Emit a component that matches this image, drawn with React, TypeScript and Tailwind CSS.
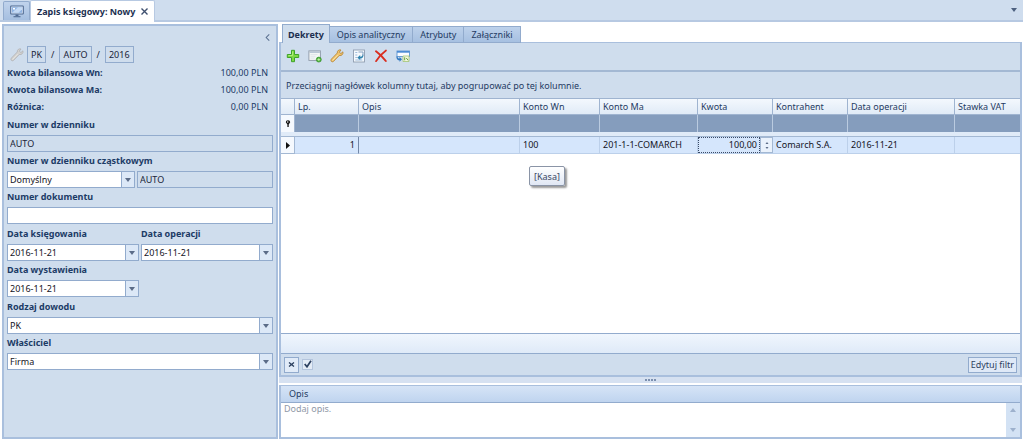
import { useState } from 'react'
import type { ReactNode } from 'react'

const COLUMNS = [
  { label: 'Lp.', width: 'w-[64px]', value: '1', align: 'text-right' },
  { label: 'Opis', width: 'w-[161px]', value: '', align: 'text-left' },
  { label: 'Konto Wn', width: 'w-[80px]', value: '100', align: 'text-left' },
  { label: 'Konto Ma', width: 'w-[98px]', value: '201-1-1-COMARCH', align: 'text-left' },
  { label: 'Kwota', width: 'w-[75px]', value: '100,00', align: 'text-right' },
  { label: 'Kontrahent', width: 'w-[75px]', value: 'Comarch S.A.', align: 'text-left' },
  { label: 'Data operacji', width: 'w-[107px]', value: '2016-11-21', align: 'text-left' },
  { label: 'Stawka VAT', width: 'w-[65px]', value: '', align: 'text-left' },
]

const TABS = ['Dekrety', 'Opis analityczny', 'Atrybuty', 'Załączniki']

const TOTALS = [
  { label: 'Kwota bilansowa Wn:', value: '100,00 PLN' },
  { label: 'Kwota bilansowa Ma:', value: '100,00 PLN' },
  { label: 'Różnica:', value: '0,00 PLN' },
]

function Arrow({ up = false, className = 'w-[6px] h-[4px]' }: { up?: boolean; className?: string }) {
  return (
    <svg viewBox="0 0 6 4" className={`block ${className}`} fill="currentColor" aria-hidden="true">
      <path d={up ? 'M0 4 3 0l3 4z' : 'M0 0h6L3 4z'} />
    </svg>
  )
}

function WrenchIcon({ faded = false }: { faded?: boolean }) {
  return (
    <svg viewBox="0 0 14 14" className="w-[14px] h-[14px]" aria-hidden="true">
      <path
        d="M12.9 2.8 10.9 4.6 9.3 3.2 11 1C8.9.4 7 1.7 7.3 4L1.3 10.2C.2 11.8 1.8 13.5 3.4 12.500L9.2 6.500C11.800 7.100 13.500 5 12.900 2.800z"
        fill={faded ? '#d3d2d0' : '#f0c46c'}
        stroke={faded ? '#b3b4b8' : '#b8883a'}
        strokeWidth="0.9"
        strokeLinejoin="round"
      />
      <path d="M2.5 11.5 7.8 6" stroke={faded ? '#e8e6e2' : '#fbe6b0'} strokeWidth="0.9" />
    </svg>
  )
}

function MonitorIcon() {
  return (
    <svg viewBox="0 0 14 13" className="w-[14px] h-[13px]" aria-hidden="true">
      <rect x="0.7" y="1" width="12.6" height="8" rx="0.5" fill="#dfeafa" stroke="#4f6a92" strokeWidth="1.1" />
      <path d="M2 2.2h10v5.6H2z" fill="#8fb3e2" />
      <path d="M2 7.8 8 2.2h4v2L8.5 7.8z" fill="#c4daf5" />
      <path d="M3 3h2v1.5H3z" fill="#fff" />
      <path d="M5.5 9.5h3v1.5h-3z" fill="#4f6a92" />
      <path d="M3.5 11h7v1.3h-7z" fill="#5d789f" />
    </svg>
  )
}

function AddIcon() {
  return (
    <svg viewBox="0 0 14 14" className="w-[14px] h-[14px]" aria-hidden="true">
      <path d="M5.5 1.3h3v4.2h4.2v3H8.500v4.200h-3V8.500H1.300v-3h4.200z" fill="#7fd846" stroke="#3fa32b" strokeWidth="1" />
      <path d="M6.500 2.500v4h-4" fill="none" stroke="#b4f07e" strokeWidth="0.900" />
    </svg>
  )
}

function NewFormIcon() {
  return (
    <svg viewBox="0 0 14 14" className="w-[14px] h-[14px]" aria-hidden="true">
      <rect x="0.9" y="1.9" width="11.5" height="9.5" fill="#f4f6f4" stroke="#8d99a8" strokeWidth="0.9" />
      <path d="M1.4 2.4h10.5v1.5H1.4z" fill="#b4c2d2" />
      <path d="M2.500 5.500h7M2.500 7.300h5M2.500 9.100h4" stroke="#dde3e8" strokeWidth="0.800" />
      <circle cx="10.800" cy="10.600" r="2.500" fill="#4fb33a" stroke="#2f8a29" strokeWidth="0.600" />
      <path d="M10.800 9.200v2.800M9.400 10.600h2.800" stroke="#c4f0a8" strokeWidth="0.900" />
    </svg>
  )
}

function RefreshSheetIcon() {
  return (
    <svg viewBox="0 0 14 14" className="w-[14px] h-[14px]" aria-hidden="true">
      <rect x="1.5" y="1" width="11" height="12" fill="#f5f9fd" stroke="#8f9db0" strokeWidth="0.9" />
      <path d="M3.3 3.5h2M3.3 6h2M3.3 8.5h2M3.3 11h7" stroke="#94b4d8" strokeWidth="0.9" />
      <path d="M6.5 3h4.500v4" fill="none" stroke="#7d98ba" strokeWidth="0.900" />
      <path d="M10.800 4.800c0 2.400-1.200 3-2.600 3V6L5.300 8.700 8.200 11V9.500c2.400 0 3.900-1.500 2.600-4.700z" fill="#2f83ad" />
    </svg>
  )
}

function DeleteIcon() {
  return (
    <svg viewBox="0 0 14 14" className="w-[14px] h-[14px]" fill="none" stroke="#d92d1f" strokeLinecap="round" aria-hidden="true">
      <path d="M2 2.3C5.5 4.8 9 8.5 11.8 12" strokeWidth="2" />
      <path d="M12 1.5C8.5 4 5 7.5 2 12.2" strokeWidth="1.7" />
    </svg>
  )
}

function CopyWindowIcon() {
  return (
    <svg viewBox="0 0 14 14" className="w-[14px] h-[14px]" aria-hidden="true">
      <rect x="1" y="2" width="12.500" height="5.500" fill="#fafcff" stroke="#5d94d0" strokeWidth="0.900" />
      <path d="M1 2h12.500v1.700H1z" fill="#4b8cd4" />
      <path d="M7 7h6v5.500H7z" fill="#f3f7df" stroke="#a3c573" strokeWidth="0.800" />
      <path d="M8.700 8.300v3M10.300 9l1.800 2.300" stroke="#63a142" strokeWidth="1" />
      <path d="M.3 7.500c0 3 1.700 3.800 3.200 3.800v1.500L6 10.300 3.500 8v1.600C2.300 9.600 1.700 9 1.500 7.500z" fill="#2f78c0" />
    </svg>
  )
}

function Field({ id, label, children }: { id: string; label: string; children: ReactNode }) {
  return (
    <div className="flex-1 min-w-0">
      <label htmlFor={id} className="block h-[19px] leading-[18px] font-bold text-[#1c3b66]">{label}</label>
      {children}
    </div>
  )
}

function Dropdown({ id, options }: { id: string; options: string[] }) {
  return (
    <div className="relative flex-1 min-w-0 h-[17px]">
      <select
        id={id}
        className="block w-full h-full appearance-none border border-[#92abcd] bg-white pl-[2px] pr-4 text-[#14141e] outline-none"
      >
        {options.map((o) => <option key={o}>{o}</option>)}
      </select>
      <span className="pointer-events-none absolute inset-y-0 right-0 w-[14px] border border-[#92abcd] bg-[#dce8f7] flex items-center justify-center text-[#5b6c88]">
        <Arrow />
      </span>
    </div>
  )
}

function DateBox({ id }: { id: string }) {
  return (
    <div className="flex h-[17px] border border-[#92abcd] bg-white">
      <input id={id} defaultValue="2016-11-21" className="flex-1 min-w-0 pl-[2px] text-[#14141e] outline-none" />
      <button type="button" aria-label="Kalendarz" className="w-[13px] shrink-0 border-l border-[#92abcd] bg-[#dce8f7] flex items-center justify-center text-[#5b6c88]">
        <Arrow />
      </button>
    </div>
  )
}

function Sidebar() {
  return (
    <aside className="w-[276px] shrink-0 border-2 border-[#a9bfdd] bg-[#cfdded] px-[3px]">
      <div className="flex justify-end pt-[6px] pr-[2px]">
        <button type="button" aria-label="Zwiń panel" className="h-[11px] px-px text-[#5a7090]">
          <svg viewBox="0 0 5 8" className="w-[5px] h-[7px]" fill="none" stroke="currentColor" strokeWidth="1.2" aria-hidden="true">
            <path d="M4.5.5 1 4l3.5 3.5" />
          </svg>
        </button>
      </div>

      {/* Document number */}
      <div className="flex items-center mt-[3px] text-[#1a2438]">
        <button type="button" aria-label="Ustaw numer" className="mx-[3px]"><WrenchIcon faded /></button>
        <span className="h-[17px] leading-[15px] border border-[#92abcd] px-[3px]">PK</span>
        <span className="px-[5px]">/</span>
        <span className="h-[17px] leading-[15px] border border-[#92abcd] px-[3px]">AUTO</span>
        <span className="px-[5px]">/</span>
        <span className="h-[17px] leading-[15px] border border-[#92abcd] px-[3px]">2016</span>
      </div>

      <dl className="mt-px mb-px text-[#1c3b66]">
        {TOTALS.map((t) => (
          <div key={t.label} className="flex justify-between h-[17px] leading-[18px] pr-[5px]">
            <dt className="font-bold">{t.label}</dt>
            <dd>{t.value}</dd>
          </div>
        ))}
      </dl>

      <div className="flex flex-col gap-px">
        <div>
          <Field id="journal" label="Numer w dzienniku">
            <input id="journal" readOnly value="AUTO" className="block w-full h-[17px] border border-[#92abcd] pl-[2px] text-[#1a2438] outline-none" />
          </Field>
          <Field id="subjournal" label="Numer w dzienniku cząstkowym">
            <div className="flex gap-[2px]">
              <Dropdown id="subjournal" options={['Domyślny']} />
              <input aria-label="Numer" readOnly value="AUTO" className="w-[136px] h-[17px] border border-[#92abcd] pl-[2px] text-[#1a2438] outline-none" />
            </div>
          </Field>
          <Field id="document" label="Numer dokumentu">
            <input id="document" className="block w-full h-[17px] border border-[#92abcd] bg-white pl-[2px] text-[#14141e] outline-none" />
          </Field>
        </div>
        <div className="grid grid-cols-2 gap-x-[2px]">
          <Field id="booked" label="Data księgowania"><DateBox id="booked" /></Field>
          <Field id="operated" label="Data operacji"><DateBox id="operated" /></Field>
          <Field id="issued" label="Data wystawienia"><DateBox id="issued" /></Field>
        </div>
        <div>
          <Field id="kind" label="Rodzaj dowodu"><Dropdown id="kind" options={['PK']} /></Field>
          <Field id="owner" label="Właściciel"><Dropdown id="owner" options={['Firma']} /></Field>
        </div>
      </div>
    </aside>
  )
}

function Toolbar() {
  const items = [
    { label: 'Dodaj', icon: <AddIcon /> },
    { label: 'Dodaj przez formularz', icon: <NewFormIcon /> },
    { label: 'Edytuj', icon: <WrenchIcon /> },
    { label: 'Odśwież', icon: <RefreshSheetIcon /> },
    { label: 'Usuń', icon: <DeleteIcon /> },
    { label: 'Kopiuj', icon: <CopyWindowIcon /> },
  ]
  return (
    <div className="flex items-center gap-2 h-[27px] pb-[2px] px-[5px]">
      {items.map((i) => (
        <button key={i.label} type="button" aria-label={i.label}>{i.icon}</button>
      ))}
    </div>
  )
}

function EntryTable() {
  return (
    <table className="w-full table-fixed border-separate border-spacing-0 text-left">
      <thead>
        <tr className="h-[17px] bg-linear-to-b from-[#f5f9fe] to-[#dfeaf6] text-[#1f3b63]">
          <th className="w-[14px] p-0 border-r border-y border-[#9fb4d0]" aria-label="Wskaźnik" />
          {COLUMNS.map((c) => (
            <th key={c.label} className={`${c.width} p-0 pl-[3px] border-r border-y border-[#9fb4d0] last:border-r-0 font-normal leading-[15px] whitespace-nowrap`}>
              {c.label}
            </th>
          ))}
        </tr>
      </thead>
      <tbody>
        <tr className="h-[17px]">
          <td className="p-0 bg-[#f5f9fe] border-r border-[#9fb4d0]">
            <svg viewBox="0 0 6 8" className="mx-auto w-[6px] h-[7px]" aria-hidden="true">
              <path d="M.5 2.500a2.500 2.200 0 0 1 5 0L3.800 5.200V8H2.300V5.200z" fill="#111" />
              <circle cx="2.700" cy="2.300" r="0.800" fill="#fff" />
            </svg>
          </td>
          {COLUMNS.map((c) => (
            <td key={c.label} className="p-0 bg-[#859dbd] border-r border-[#bacbe0] last:border-r-0" />
          ))}
        </tr>
        <tr className="h-[5px]">
          <td colSpan={COLUMNS.length + 1} className="p-0 bg-[#e0ebf8] border-b border-[#a3b8d3]" />
        </tr>
        <tr className="h-[17px] leading-[14px] text-[#14141e]">
          <td className="p-0 bg-[#f5f9fe] border-r border-b border-[#a3b8d3]">
            <svg viewBox="0 0 4 7" className="mx-auto w-[4px] h-[7px]" aria-hidden="true">
              <path d="M0 0l4 3.500L0 7z" fill="#111" />
            </svg>
          </td>
          {COLUMNS.map((c) =>
            c.label === 'Kwota' ? (
              <td key={c.label} className="p-0 bg-[#d5e6fc] border-b border-[#bcd0ea]">
                <div className="flex h-[16px]">
                  <input aria-label="Kwota" defaultValue={c.value} className="flex-1 min-w-0 border border-dotted border-[#3a4a66] pr-[2px] text-right outline-none" />
                  <div className="w-[13px] shrink-0 flex flex-col items-center justify-center gap-[3px] border border-[#a3b8d3] bg-[#eaf2fc] text-[#5b6c88]">
                    <button type="button" aria-label="Zwiększ"><Arrow up className="w-[4px] h-[2px]" /></button>
                    <button type="button" aria-label="Zmniejsz"><Arrow className="w-[4px] h-[2px]" /></button>
                  </div>
                </div>
              </td>
            ) : (
              <td
                key={c.label}
                className={`${c.align} px-[3px] py-0 bg-[#d5e6fc] border-r border-b border-[#bcd0ea] ${c.label === 'Lp.' ? 'border-r-[#7388a8]' : ''} last:border-r-0 whitespace-nowrap`}
              >
                {c.value}
              </td>
            ),
          )}
        </tr>
      </tbody>
    </table>
  )
}

function FilterBar() {
  const [active, setActive] = useState(true)
  return (
    <div className="flex items-center h-[21px] px-[3px] bg-[#cfdded] text-[#2e4261]">
      <button type="button" aria-label="Wyczyść filtr" className="w-[15px] h-[16px] border border-[#92abcd] bg-[#e1ebf8] flex items-center justify-center">
        <svg viewBox="0 0 7 6" className="w-[7px] h-[5px]" fill="none" stroke="currentColor" strokeWidth="1.5" aria-hidden="true">
          <path d="M.5.5l6 5M6.5.5l-6 5" />
        </svg>
      </button>
      <label className="relative ml-[3px] w-[11px] h-[11px]">
        <input
          type="checkbox"
          aria-label="Filtr aktywny"
          checked={active}
          onChange={(e) => setActive(e.target.checked)}
          className="block w-full h-full appearance-none border border-[#b4c5dd] bg-[#e4ecf6]"
        />
        {active && (
          <svg viewBox="0 0 8 8" className="pointer-events-none absolute left-[2px] top-px w-[8px] h-[8px]" fill="none" stroke="currentColor" strokeWidth="1.7" aria-hidden="true">
            <path d="M.7 4 3 6.8 7 .8" />
          </svg>
        )}
      </label>
      <button type="button" className="ml-auto h-[16px] leading-[14px] px-[2px] border border-[#92abcd] bg-[#dfe9f7]">Edytuj filtr</button>
    </div>
  )
}

function NotePanel() {
  return (
    <section className="border-2 border-t border-[#a9bfdd]">
      <h2 className="h-[17px] leading-[16px] pl-2 border-b border-[#92abcd] bg-linear-to-b from-[#d6e4f6] to-[#bfd4ef] text-[#1f3b63]">Opis</h2>
      <div className="flex h-[34px] bg-white">
        <textarea aria-label="Opis" placeholder="Dodaj opis." className="flex-1 min-w-0 resize-none overflow-hidden leading-[12px] px-[3px] outline-none text-[#14141e] placeholder:text-[#8f98a6]" />
        <div className="w-[14px] shrink-0 flex flex-col items-center justify-between py-[5px] bg-[#d3e2f4] text-[#9db1cd]">
          <button type="button" aria-label="Przewiń w górę"><Arrow up /></button>
          <button type="button" aria-label="Przewiń w dół"><Arrow /></button>
        </div>
      </div>
    </section>
  )
}

export default function App() {
  const [tab, setTab] = useState(TABS[0])

  return (
    <div className="flex flex-col min-h-screen bg-white font-['Noto_Sans',sans-serif] text-[9px] leading-[15px] cursor-default">
      {/* Document tabs */}
      <header className="flex items-end h-[22px] shrink-0 pl-[3px] pr-[6px] border-b-2 border-[#b7c9e2] bg-[#cfddee]">
        <button type="button" aria-label="Pulpit" className="w-[27px] h-[19px] flex items-center justify-center rounded-t-[2px] border border-b-0 border-[#92abcd] bg-linear-to-b from-[#c0d3ec] to-[#a5bfe0]">
          <MonitorIcon />
        </button>
        <div className="flex items-center gap-[6px] h-[22px] -mb-[2px] px-[6px] rounded-t-[2px] border border-b-0 border-[#b7c9e2] bg-white">
          <span className="font-bold text-[#1c2f50]">Zapis księgowy: Nowy</span>
          <button type="button" aria-label="Zamknij" className="text-[#3e4f6e]">
            <svg viewBox="0 0 7 7" className="w-[7px] h-[7px]" fill="none" stroke="currentColor" strokeWidth="1.4" aria-hidden="true">
              <path d="M.5.5l6 6M6.5.5l-6 6" />
            </svg>
          </button>
        </div>
        <button type="button" aria-label="Lista kart" className="ml-auto mb-[8px] text-[#4d607f]">
          <Arrow />
        </button>
      </header>

      <div className="flex flex-1 gap-px p-[2px] pr-px">
        <Sidebar />

        <main className="flex flex-col flex-1 min-w-0">
          <div role="tablist" className="flex items-end h-[19px] pl-[3px] relative z-10">
            {TABS.map((t) => (
              <button
                key={t}
                type="button"
                role="tab"
                aria-selected={t === tab}
                onClick={() => setTab(t)}
                className={
                  t === tab
                    ? 'h-[19px] px-[5px] border border-b-0 border-[#92abcd] bg-[#cfdded] font-bold text-[#1c2f50]'
                    : 'h-[17px] px-[7px] border border-l-0 border-[#92abcd] bg-linear-to-b from-[#bdd1eb] to-[#a6c0e1] text-[#1f3b63]'
                }
              >
                {t}
              </button>
            ))}
          </div>

          <section className="flex flex-col flex-1 -mt-px border-x-2 border-t border-[#a9bfdd] bg-[#cfdded]">
            <Toolbar />
            <p className="h-[28px] leading-[28px] pl-[5px] border-t-2 border-[#a3b8d3] text-[#1f3b63]">
              Przeciągnij nagłówek kolumny tutaj, aby pogrupować po tej kolumnie.
            </p>
            <div className="relative flex-1 bg-white">
              <EntryTable />
              <div role="tooltip" className="absolute left-[248px] top-[68px] h-[20px] leading-[19px] px-[4px] rounded-[2px] border border-[#8a94a6] bg-linear-to-b from-white to-[#e0e7f4] text-[#3b4a66] shadow-[2px_2px_2px_rgba(0,0,0,0.4)]">
                [Kasa]
              </div>
            </div>
            <div className="h-[21px] border-y border-[#92abcd] bg-linear-to-b from-[#f0f6fd] to-[#dfeaf8]" />
            <FilterBar />
          </section>

          <div role="separator" className="flex items-center justify-center gap-px h-[8px] border-t-2 border-[#a9bfdd] bg-[#d6e1f1]">
            {[0, 1, 2, 3].map((d) => <i key={d} className="w-[2px] h-[2px] bg-[#7c90b0]" />)}
          </div>
          <div className="h-[2px] bg-white" />
          <NotePanel />
        </main>
      </div>
    </div>
  )
}
